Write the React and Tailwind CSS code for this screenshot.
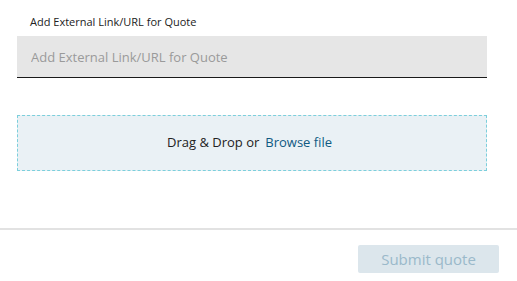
export default function App() {
  return (
    <div className="w-[517px] h-[281px] bg-white font-['Open_Sans',sans-serif] overflow-hidden">
      <div className="px-[17px] pt-[14px] w-[487px]">
        <label className="block pl-[13px] text-[11px] leading-[16px] text-[#222]">
          Add External Link/URL for Quote
        </label>
        <input
          placeholder="Add External Link/URL for Quote"
          className="mt-[6px] block w-[470px] h-[42px] bg-[#e6e6e6] border-b-[1.5px] border-[#1a1a1a] px-[14px] text-[13px] text-[#333] placeholder:text-[#9a9a9a] outline-none"
        />
        <div className="mt-[37px] h-[56px] w-[470px] bg-[#eaf1f5] border border-dashed border-[#7ccfdc] flex items-center justify-center pr-[5px] text-[13px] text-[#222]">
          <span>Drag &amp; Drop or</span>
          <button className="ml-[6px] text-[#0f5a82]">Browse file</button>
        </div>
      </div>
      <div className="mt-[57px] h-[2px] bg-[#e2e2e2]" />
      <div className="flex justify-end pr-[18px] pt-[15px]">
        <button
          disabled
          className="w-[141px] h-[28px] rounded-[2px] bg-[#dce6ec] text-[15px] text-[#9ab9ca]"
        >
          Submit quote
        </button>
      </div>
    </div>
  );
}
